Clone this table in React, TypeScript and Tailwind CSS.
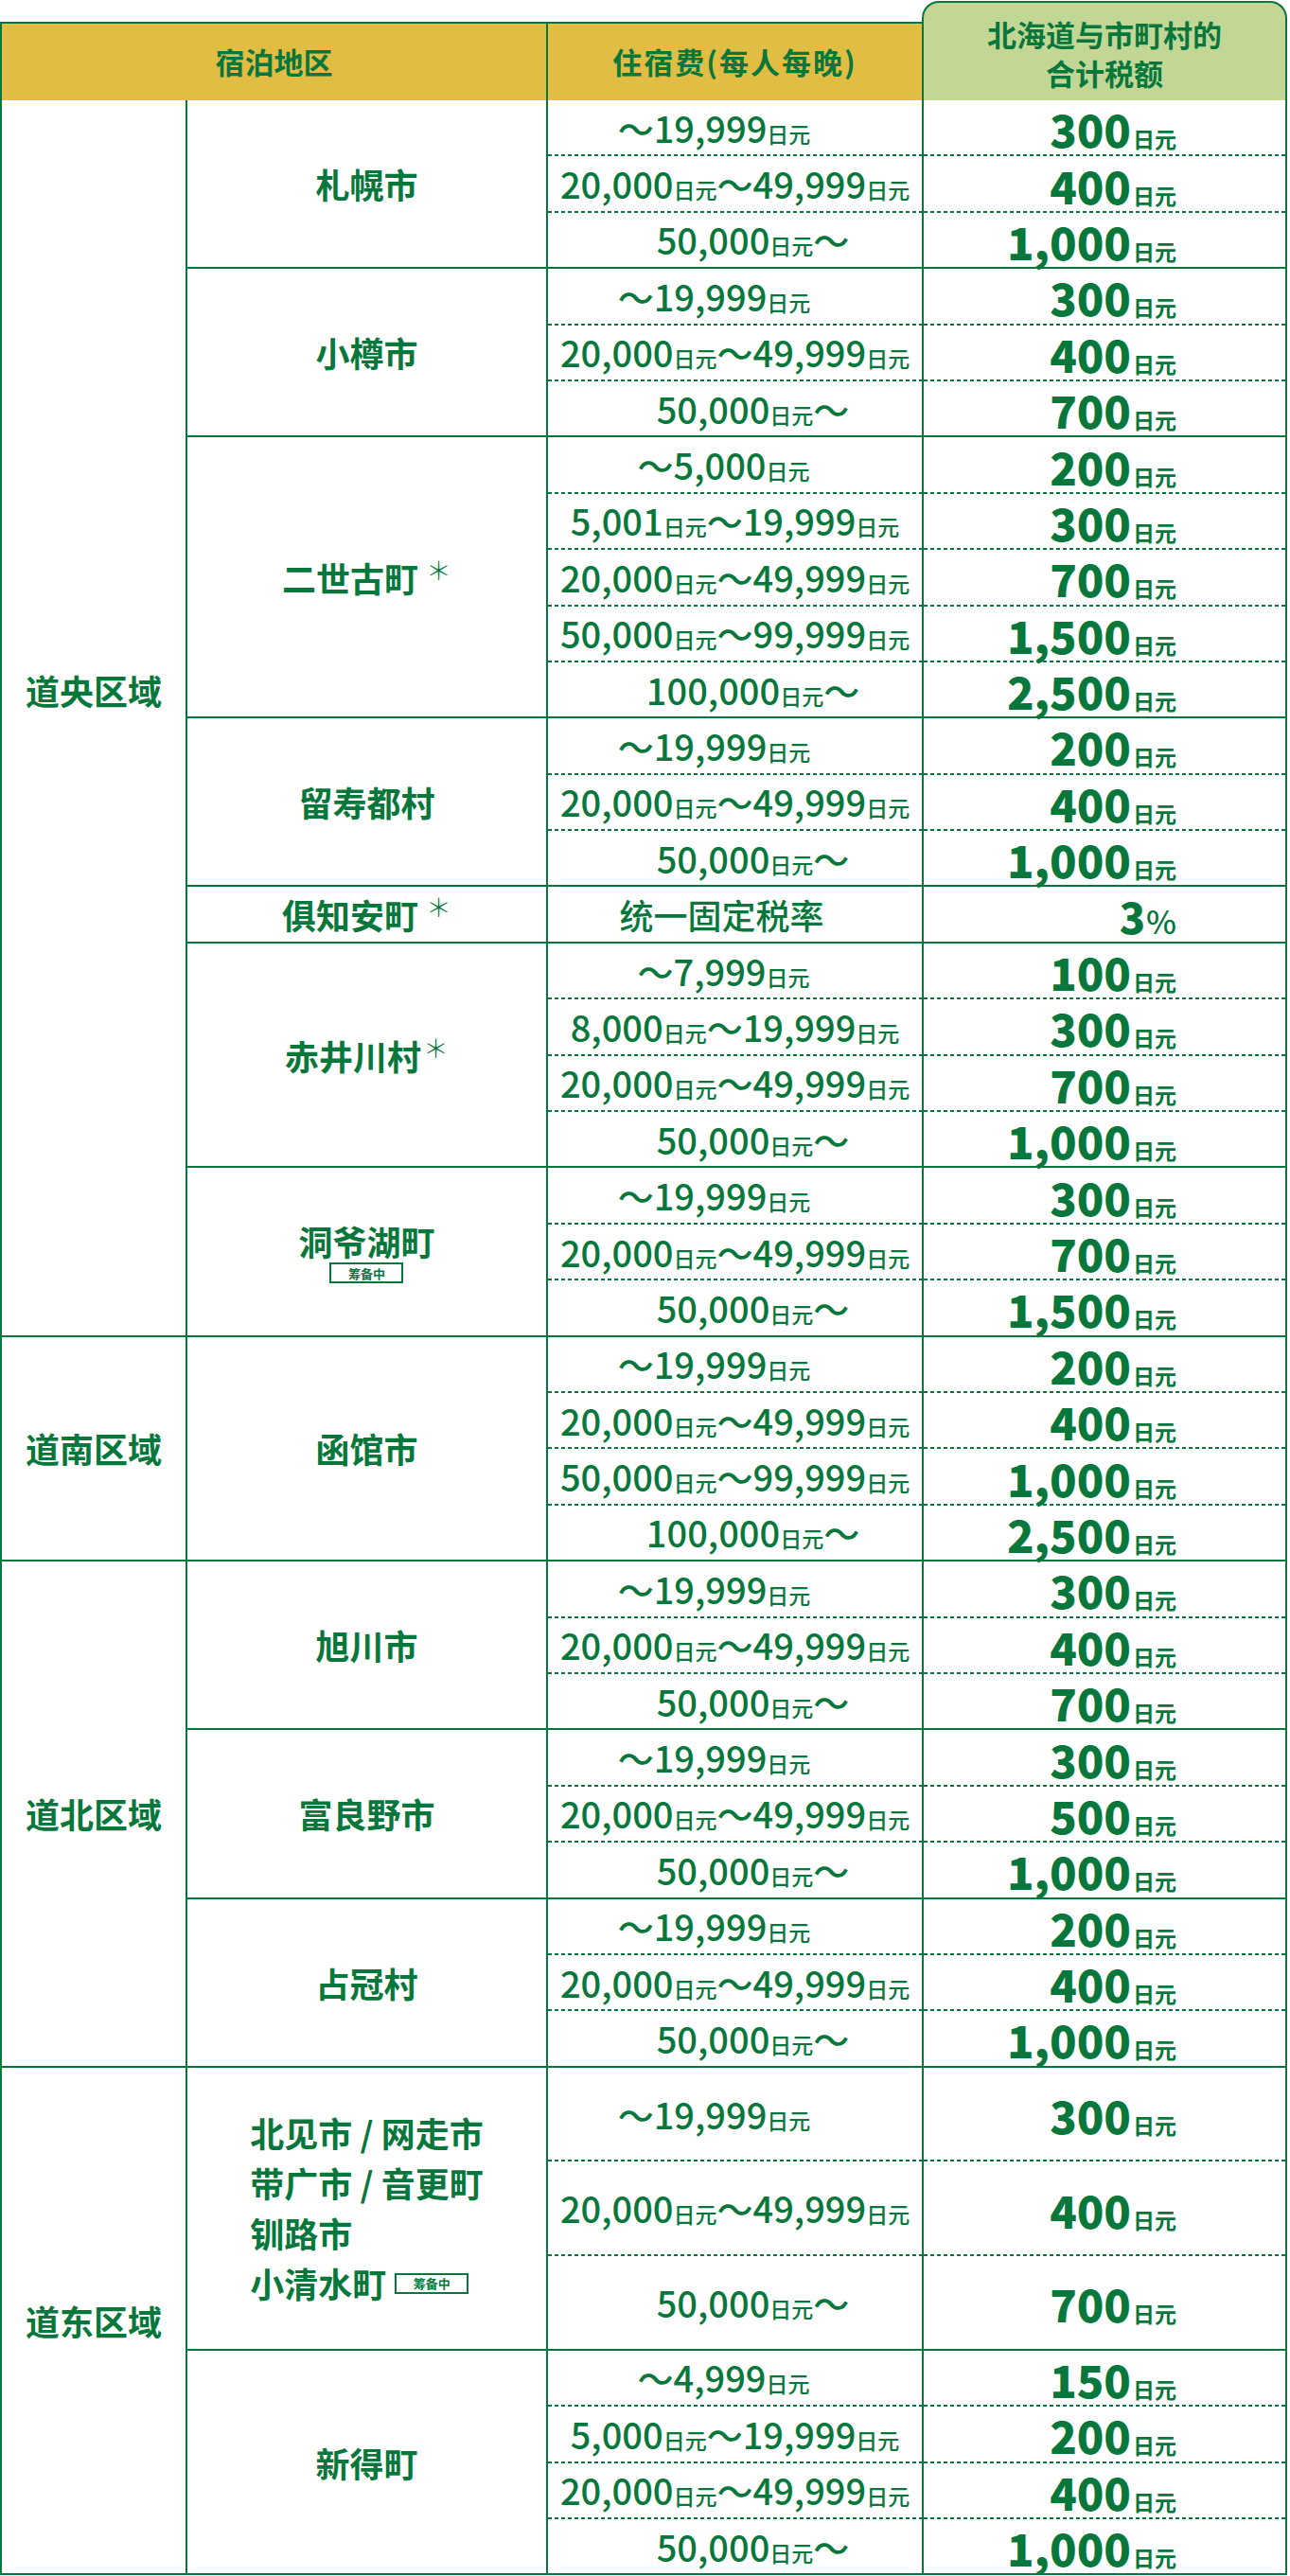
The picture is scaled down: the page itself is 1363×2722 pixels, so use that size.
import React from 'react';

type Row = { price: string; tax: string };
type Sub = { name: React.ReactNode; rows: Row[]; tall?: boolean };
type Region = { name: string; subs: Sub[]; lift?: boolean };

const r = (price: string, tax: string): Row => ({ price, tax });

const Star = ({ gap = true }: { gap?: boolean }) => (
  <span className={`inline-block align-top font-light text-[27px] leading-none ${gap ? 'ml-[8px]' : 'ml-[2px]'} -mt-[4px]`}>＊</span>
);

const Badge = () => (
  <span className="inline-flex items-center justify-center w-[78px] h-[22px] border-2 border-[#08773c] text-[13px] font-bold leading-none">筹备中</span>
);

const regions: Region[] = [
  {
    name: '道央区域',
    lift: true,
    subs: [
      { name: '札幌市', rows: [r('～19,999日元', '300日元'), r('20,000日元～49,999日元', '400日元'), r('50,000日元～', '1,000日元')] },
      { name: '小樽市', rows: [r('～19,999日元', '300日元'), r('20,000日元～49,999日元', '400日元'), r('50,000日元～', '700日元')] },
      {
        name: <span>二世古町<Star /></span>,
        rows: [
          r('～5,000日元', '200日元'),
          r('5,001日元～19,999日元', '300日元'),
          r('20,000日元～49,999日元', '700日元'),
          r('50,000日元～99,999日元', '1,500日元'),
          r('100,000日元～', '2,500日元'),
        ],
      },
      { name: '留寿都村', rows: [r('～19,999日元', '200日元'), r('20,000日元～49,999日元', '400日元'), r('50,000日元～', '1,000日元')] },
      { name: <span>俱知安町<Star /></span>, rows: [r('统一固定税率', '3%')] },
      {
        name: <span>赤井川村<Star gap={false} /></span>,
        rows: [r('～7,999日元', '100日元'), r('8,000日元～19,999日元', '300日元'), r('20,000日元～49,999日元', '700日元'), r('50,000日元～', '1,000日元')],
      },
      {
        name: (
          <span className="flex flex-col items-center gap-[5px] pt-[4px]">
            <span>洞爷湖町</span>
            <Badge />
          </span>
        ),
        rows: [r('～19,999日元', '300日元'), r('20,000日元～49,999日元', '700日元'), r('50,000日元～', '1,500日元')],
      },
    ],
  },
  {
    name: '道南区域',
    subs: [
      {
        name: '函馆市',
        rows: [r('～19,999日元', '200日元'), r('20,000日元～49,999日元', '400日元'), r('50,000日元～99,999日元', '1,000日元'), r('100,000日元～', '2,500日元')],
      },
    ],
  },
  {
    name: '道北区域',
    subs: [
      { name: '旭川市', rows: [r('～19,999日元', '300日元'), r('20,000日元～49,999日元', '400日元'), r('50,000日元～', '700日元')] },
      { name: '富良野市', rows: [r('～19,999日元', '300日元'), r('20,000日元～49,999日元', '500日元'), r('50,000日元～', '1,000日元')] },
      { name: '占冠村', rows: [r('～19,999日元', '200日元'), r('20,000日元～49,999日元', '400日元'), r('50,000日元～', '1,000日元')] },
    ],
  },
  {
    name: '道东区域',
    subs: [
      {
        name: (
          <span className="flex flex-col items-start leading-[53px]">
            <span>北见市 / 网走市</span>
            <span>带广市 / 音更町</span>
            <span>钏路市</span>
            <span className="flex items-center gap-[9px]">
              小清水町
              <Badge />
            </span>
          </span>
        ),
        tall: true,
        rows: [r('～19,999日元', '300日元'), r('20,000日元～49,999日元', '400日元'), r('50,000日元～', '700日元')],
      },
      {
        name: '新得町',
        rows: [r('～4,999日元', '150日元'), r('5,000日元～19,999日元', '200日元'), r('20,000日元～49,999日元', '400日元'), r('50,000日元～', '1,000日元')],
      },
    ],
  },
];

// the source text is not strictly centred: leading ～ rows sit left, trailing ～ rows sit right
function priceShift(text: string) {
  if (text === '统一固定税率') return 'pr-[28px]';
  if (text.startsWith('～')) return text.length > 8 ? 'pr-[44px]' : 'pr-[24px]';
  if (text.endsWith('～')) return text.length > 10 ? '' : 'pl-[38px]';
  return '';
}

function Price({ text }: { text: string }) {
  if (!text.includes('日元')) return <span className="text-[36px] font-medium leading-none">{text}</span>;
  return (
    <span className="text-[38px] font-medium leading-none">
      {text.split(/(日元)/).map((p, i) =>
        p === '日元' ? (
          <span key={i} className="text-[23px]">
            日元
          </span>
        ) : (
          <span key={i}>{p}</span>
        )
      )}
    </span>
  );
}

function Tax({ text }: { text: string }) {
  if (text === '3%') {
    return (
      <span className="inline-flex items-baseline font-black text-[45px] leading-none">
        3<span className="text-[34px] font-medium ml-[1px]">%</span>
      </span>
    );
  }
  const num = text.replace('日元', '');
  return (
    <span className="inline-flex items-baseline leading-none">
      <span className="inline-block text-[47px] font-black leading-none">{num}</span>
      <span className="inline-block text-[23px] font-bold leading-none ml-[2px]">日元</span>
    </span>
  );
}

function Dashed() {
  return (
    <div className="flex h-[2px]">
      <div className="w-[395px] bg-[repeating-linear-gradient(90deg,#08773c_0_4px,transparent_4px_7px)]" />
      <div className="w-[2px] bg-[#08773c]" />
      <div className="flex-1 bg-[repeating-linear-gradient(90deg,#08773c_0_4px,transparent_4px_7px)]" />
    </div>
  );
}

function SubGroup({ sub, first }: { sub: Sub; first: boolean }) {
  return (
    <div className={`flex ${first ? '' : 'border-t-2 border-[#08773c]'}`}>
      <div className="w-[381px] shrink-0 border-r-2 border-[#08773c] flex items-center justify-center text-[36px] font-bold leading-none">
        {sub.name}
      </div>
      <div className="flex-1 flex flex-col">
        {sub.rows.map((row, i) => (
          <React.Fragment key={i}>
            {i > 0 && <Dashed />}
            <div className={`flex ${sub.tall ? 'h-[97.7px]' : 'h-[57.4px]'}`}>
              <div className={`w-[397px] shrink-0 border-r-2 border-[#08773c] flex items-center justify-center ${priceShift(row.price)}`}>
                <Price text={row.price} />
              </div>
              <div className="flex-1 flex items-center justify-end pr-[115px] pt-[2px]">
                <Tax text={row.tax} />
              </div>
            </div>
          </React.Fragment>
        ))}
      </div>
    </div>
  );
}

export default function App() {
  return (
    <div className="w-[1363px] bg-white text-[#08773c] font-['Noto_Sans_CJK_SC','Noto_Sans_CJK_JP',sans-serif]">
      <div className="w-[1360px]">
        {/* header */}
        <div className="flex items-end h-[106px]">
          <div className="w-[974px] h-[83px] flex bg-[#e1bd44] border-t-2 border-l-2 border-[#08773c]">
            <div className="w-[575px] flex items-center justify-center text-[31px] font-bold">宿泊地区</div>
            <div className="flex-1 border-l-2 border-[#08773c] flex items-center justify-center text-[31px] font-bold tracking-[2px]">
              住宿费(每人每晚)
            </div>
          </div>
          <div className="flex-1 h-[105px] bg-[#c2d796] border-2 border-b-0 border-[#08773c] rounded-t-[18px] flex flex-col items-center justify-center text-[31px] font-bold leading-[41px] pt-[2px]">
            <span>北海道与市町村的</span>
            <span>合计税额</span>
          </div>
        </div>

        {/* body */}
        <div className="border-l-2 border-r-2 border-b-2 border-[#08773c]">
          {regions.map((reg, ri) => (
            <div key={reg.name} className={`flex ${ri > 0 ? 'border-t-2 border-[#08773c]' : ''}`}>
              <div
                className={`w-[196px] shrink-0 border-r-2 border-[#08773c] flex items-center justify-center text-[36px] font-bold ${
                  reg.lift ? 'pb-[58px]' : ''
                }`}
              >
                {reg.name}
              </div>
              <div className="flex-1 flex flex-col">
                {reg.subs.map((s, si) => (
                  <SubGroup key={si} sub={s} first={si === 0} />
                ))}
              </div>
            </div>
          ))}
        </div>
      </div>
    </div>
  );
}
